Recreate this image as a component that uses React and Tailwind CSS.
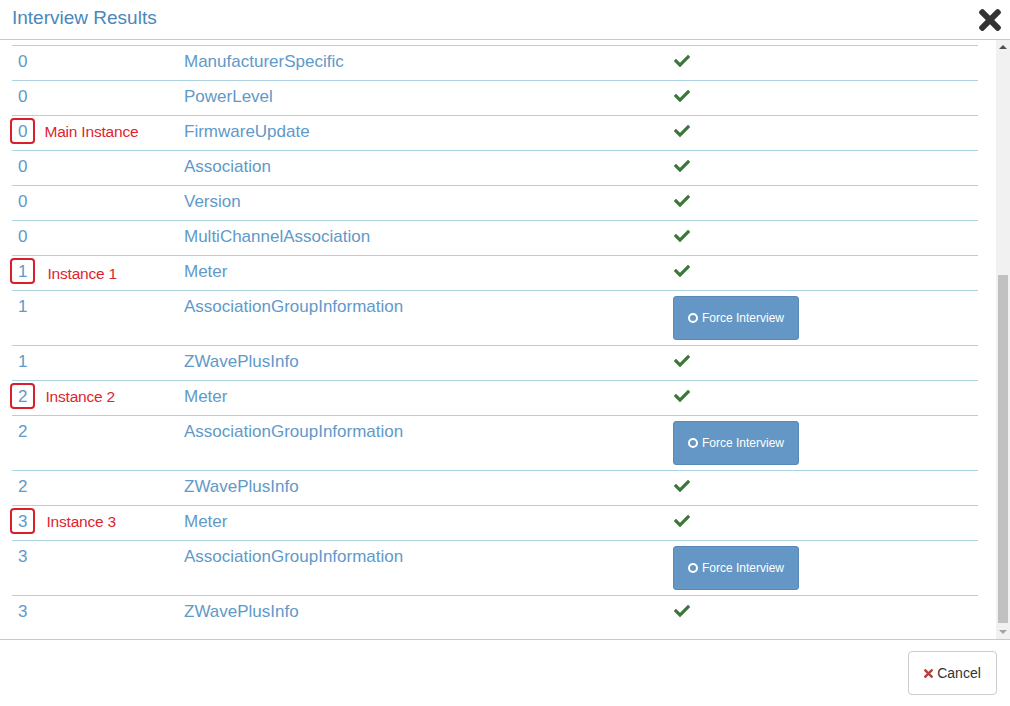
import { FaCheck } from 'react-icons/fa'

const rows = [
  { inst: '0', cc: 'ManufacturerSpecific' },
  { inst: '0', cc: 'PowerLevel' },
  { inst: '0', cc: 'FirmwareUpdate', note: 'Main Instance', noteX: 'ml-[17px]' },
  { inst: '0', cc: 'Association' },
  { inst: '0', cc: 'Version' },
  { inst: '0', cc: 'MultiChannelAssociation' },
  { inst: '1', cc: 'Meter', note: 'Instance 1', noteX: 'ml-[20px] mt-[2px]' },
  { inst: '1', cc: 'AssociationGroupInformation', force: true },
  { inst: '1', cc: 'ZWavePlusInfo' },
  { inst: '2', cc: 'Meter', note: 'Instance 2', noteX: 'ml-[18px]' },
  { inst: '2', cc: 'AssociationGroupInformation', force: true },
  { inst: '2', cc: 'ZWavePlusInfo' },
  { inst: '3', cc: 'Meter', note: 'Instance 3', noteX: 'ml-[19px]' },
  { inst: '3', cc: 'AssociationGroupInformation', force: true },
  { inst: '3', cc: 'ZWavePlusInfo' },
]

function TimesIcon({ className }) {
  return (
    <svg viewBox="0 80 352 352" className={className} fill="currentColor">
      <path d="M242.72 256l100.07-100.07c12.28-12.280 12.28-32.19 0-44.48l-22.24-22.24c-12.28-12.28-32.19-12.28-44.48 0L176 189.28 75.93 89.21c-12.28-12.28-32.19-12.28-44.48 0L9.21 111.45c-12.28 12.28-12.28 32.19 0 44.48L109.28 256 9.21 356.07c-12.28 12.28-12.28 32.19 0 44.48l22.24 22.24c12.28 12.28 32.2 12.28 44.48 0L176 322.72l100.07 100.07c12.28 12.28 32.2 12.28 44.48 0l22.24-22.24c12.28-12.28 12.28-32.19 0-44.48L242.72 256z" />
    </svg>
  )
}

function Row({ row }) {
  return (
    <div className={`grid grid-cols-[166px_490px_1fr] border-t border-[#add3e3] text-[17px] leading-[22px] text-[#6199c9] ${row.force ? 'h-[55px]' : 'h-[35px]'}`}>
      <div className="relative flex items-start px-[6px] pt-[5px]">
        {row.note && (
          <span className="absolute left-[-2px] top-[2px] w-[25px] h-[26px] border-2 border-[#d8202b] rounded-[4px]" />
        )}
        <span>{row.inst}</span>
        {row.note && (
          <span className={`${row.noteX} text-[15.5px] text-[#dd2530] tracking-[-0.2px]`}>{row.note}</span>
        )}
      </div>
      <div className="px-[6px] pt-[5px]">{row.cc}</div>
      <div className="px-[5px] pt-[5px]">
        {row.force ? (
          <button className="w-[126px] h-[44px] bg-[#6497c5] border border-[#5889b8] rounded-[3px] text-white text-[12px] flex items-center justify-center gap-[4px]">
            <span className="w-[10px] h-[10px] rounded-full border-2 border-white" />
            <span>Force Interview</span>
          </button>
        ) : (
          <FaCheck className="ml-[1px] mt-[2px] w-[16px] h-[16px] text-[#3b763b]" />
        )}
      </div>
    </div>
  )
}

export default function App() {
  return (
    <div className="w-[1010px] h-[706px] bg-white flex flex-col overflow-hidden" style={{ fontFamily: '"Liberation Sans", Arial, sans-serif' }}>
      <div className="h-[40px] shrink-0 border-b border-[#add3e3] flex items-center justify-between pl-[12px] pr-[10px]">
        <h2 className="text-[19px] text-[#4a87bb] -mt-[3px]">Interview Results</h2>
        <TimesIcon className="w-[22px] h-[22px] text-[#333] translate-x-[1px]" />
      </div>

      <div className="h-[600px] shrink-0 flex border-b border-[#add3e3]">
        <div className="flex-1 pl-[12px] pr-[18px] pt-[5px] overflow-hidden">
          {rows.map((r, i) => <Row key={i} row={r} />)}
        </div>
        <div className="w-[14px] bg-[#f1f1f1] flex flex-col items-center">
          <div className="h-[14px] flex items-center justify-center">
            <span className="w-0 h-0 border-l-[4px] border-r-[4px] border-b-[4px] border-l-transparent border-r-transparent border-b-[#505050]" />
          </div>
          <div className="flex-1 w-full flex flex-col pt-[221px] pb-[2px]">
            <div className="flex-1 mx-[2px] bg-[#c1c1c1]" />
          </div>
          <div className="h-[14px] flex items-center justify-center">
            <span className="w-0 h-0 border-l-[4px] border-r-[4px] border-t-[4px] border-l-transparent border-r-transparent border-t-[#a3a3a3]" />
          </div>
        </div>
      </div>

      <div className="flex-1 flex justify-end items-start pt-[11px] pr-[13px]">
        <button className="w-[89px] h-[44px] bg-white border border-[#cccccc] rounded-[4px] flex items-center justify-center gap-[4px] text-[14px] text-[#333]">
          <TimesIcon className="w-[9px] h-[9px] text-[#b5403e]" />
          <span>Cancel</span>
        </button>
      </div>
    </div>
  )
}
